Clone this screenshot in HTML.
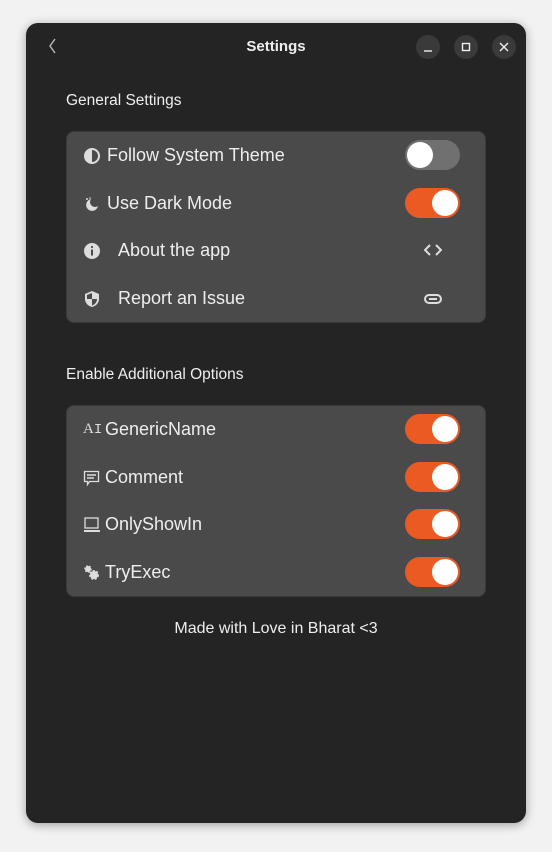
<!DOCTYPE html>
<html><head><style>
*{margin:0;padding:0;box-sizing:border-box}
body{width:552px;height:852px;background:#f2f2f2;font-family:"Liberation Sans","DejaVu Sans",sans-serif;position:relative;overflow:hidden}
.win{position:absolute;left:26px;top:23px;width:500px;height:800px;background:#242424;border-radius:12px;box-shadow:0 2px 10px rgba(0,0,0,.35)}
.title{position:absolute;left:0;right:0;top:15px;text-align:center;color:#eee;font-weight:bold;font-size:15px}
.back{position:absolute;left:20px;top:13px}
.wb{position:absolute;top:12px;width:24px;height:24px;border-radius:50%;background:#3a3a3a}
.h{position:absolute;left:40px;color:#eee;font-size:15.5px}
.card{position:absolute;left:40px;width:420px;height:192px;background:#4a4a4a;border:1px solid #3a3a3a;border-radius:8px;overflow:hidden}
.row{height:47.5px;position:relative;color:#eee;font-size:18px}
.row .ic{position:absolute;left:16px;top:15px;width:18px;height:18px}
.row .t{position:absolute;top:13px}
.tg{position:absolute;left:338px;top:8px;width:55px;height:30px;border-radius:15px;background:#ec5a24}
.tg::after{content:"";position:absolute;top:2px;left:27px;width:26px;height:26px;border-radius:50%;background:#fff}
.tg.off{background:#707070}.tg.off::after{left:2px}
.foot{position:absolute;left:0;right:0;top:597px;text-align:center;color:#eee;font-size:16px}
</style></head><body>
<div class="win">
<svg class="back" width="14" height="20" viewBox="0 0 14 20"><path d="M9 3 L4 10 L9 17" stroke="#bbb" stroke-width="1.4" fill="none"/></svg>
<div class="title">Settings</div>
<div class="wb" style="left:390px"><svg width="24" height="24"><path d="M8 16h8" stroke="#eee" stroke-width="1.4"/></svg></div>
<div class="wb" style="left:428px"><svg width="24" height="24"><rect x="8.5" y="8.5" width="7" height="7" stroke="#eee" stroke-width="1.4" fill="none"/></svg></div>
<div class="wb" style="left:466px"><svg width="24" height="24"><path d="M8 8l8 8M16 8l-8 8" stroke="#eee" stroke-width="1.4"/></svg></div>

<div class="h" style="top:69px">General Settings</div>
<div class="card" style="top:108px">
 <div class="row"><svg class="ic" viewBox="0 0 18 18"><circle cx="9" cy="9" r="7" stroke="#ddd" stroke-width="2" fill="none"/><path d="M9 2a7 7 0 0 0 0 14z" fill="#ddd"/></svg><span class="t" style="left:40px">Follow System Theme</span><div class="tg off"></div></div>
 <div class="row"><svg class="ic" viewBox="0 0 18 18"><path d="M8 4a6 6 0 1 0 7 7a5 5 0 0 1-7-7z" fill="#ddd"/><circle cx="4" cy="4" r="1" fill="#ddd"/><circle cx="7" cy="3" r=".8" fill="#ddd"/></svg><span class="t" style="left:40px">Use Dark Mode</span><div class="tg"></div></div>
 <div class="row"><svg class="ic" viewBox="0 0 18 18"><circle cx="9" cy="9" r="8" fill="#ddd"/><rect x="8" y="7.5" width="2" height="6" fill="#4a4a4a"/><circle cx="9" cy="5" r="1.1" fill="#4a4a4a"/></svg><span class="t" style="left:51px">About the app</span><svg style="position:absolute;left:357px;top:17px" width="18" height="12"><path d="M6 1L1 6l5 5M12 1l5 5-5 5" stroke="#ddd" stroke-width="2" fill="none"/></svg></div>
 <div class="row"><svg class="ic" viewBox="0 0 18 18"><path d="M9 1l7 3v5c0 4-3 7-7 8c-4-1-7-4-7-8V4z" fill="#ddd"/><path d="M9 3v6h5c0 3-2 5.5-5 6.5V9H4V5z" fill="#4a4a4a"/></svg><span class="t" style="left:51px">Report an Issue</span><svg style="position:absolute;left:357px;top:18px" width="18" height="12"><rect x="1" y="2" width="16" height="8" rx="4" stroke="#ddd" stroke-width="2" fill="none"/><path d="M5 6h8" stroke="#ddd" stroke-width="2"/></svg></div>
</div>

<div class="h" style="top:343px">Enable Additional Options</div>
<div class="card" style="top:382px">
 <div class="row"><span style="position:absolute;left:16px;top:15px;font-family:'Liberation Serif',serif;font-size:15px;color:#ddd">A<span style="font-family:'Liberation Mono';font-size:14px">I</span></span><span class="t" style="left:38px">GenericName</span><div class="tg"></div></div>
 <div class="row"><svg class="ic" viewBox="0 0 18 18"><path d="M1.5 2.5h14v10h-9l-2 3v-3h-3z" stroke="#ddd" stroke-width="1.3" fill="none"/><path d="M4 6h9M4 9h7" stroke="#ddd" stroke-width="1.5"/></svg><span class="t" style="left:38px">Comment</span><div class="tg"></div></div>
 <div class="row"><svg class="ic" viewBox="0 0 18 18"><rect x="2" y="2" width="13" height="10" stroke="#ddd" stroke-width="1.3" fill="none"/><path d="M1 15h16" stroke="#ddd" stroke-width="2"/></svg><span class="t" style="left:38px">OnlyShowIn</span><div class="tg"></div></div>
 <div class="row"><svg class="ic" viewBox="0 0 18 18"><circle cx="5" cy="5" r="3" fill="#ddd" stroke="#ddd" stroke-width="1.5" stroke-dasharray="1.5 1.5"/><circle cx="11" cy="11" r="4" fill="#ddd" stroke="#ddd" stroke-width="2" stroke-dasharray="2 1.5"/></svg><span class="t" style="left:38px">TryExec</span><div class="tg"></div></div>
</div>
<div class="foot">Made with Love in Bharat &lt;3</div>
</div>
</body></html>
